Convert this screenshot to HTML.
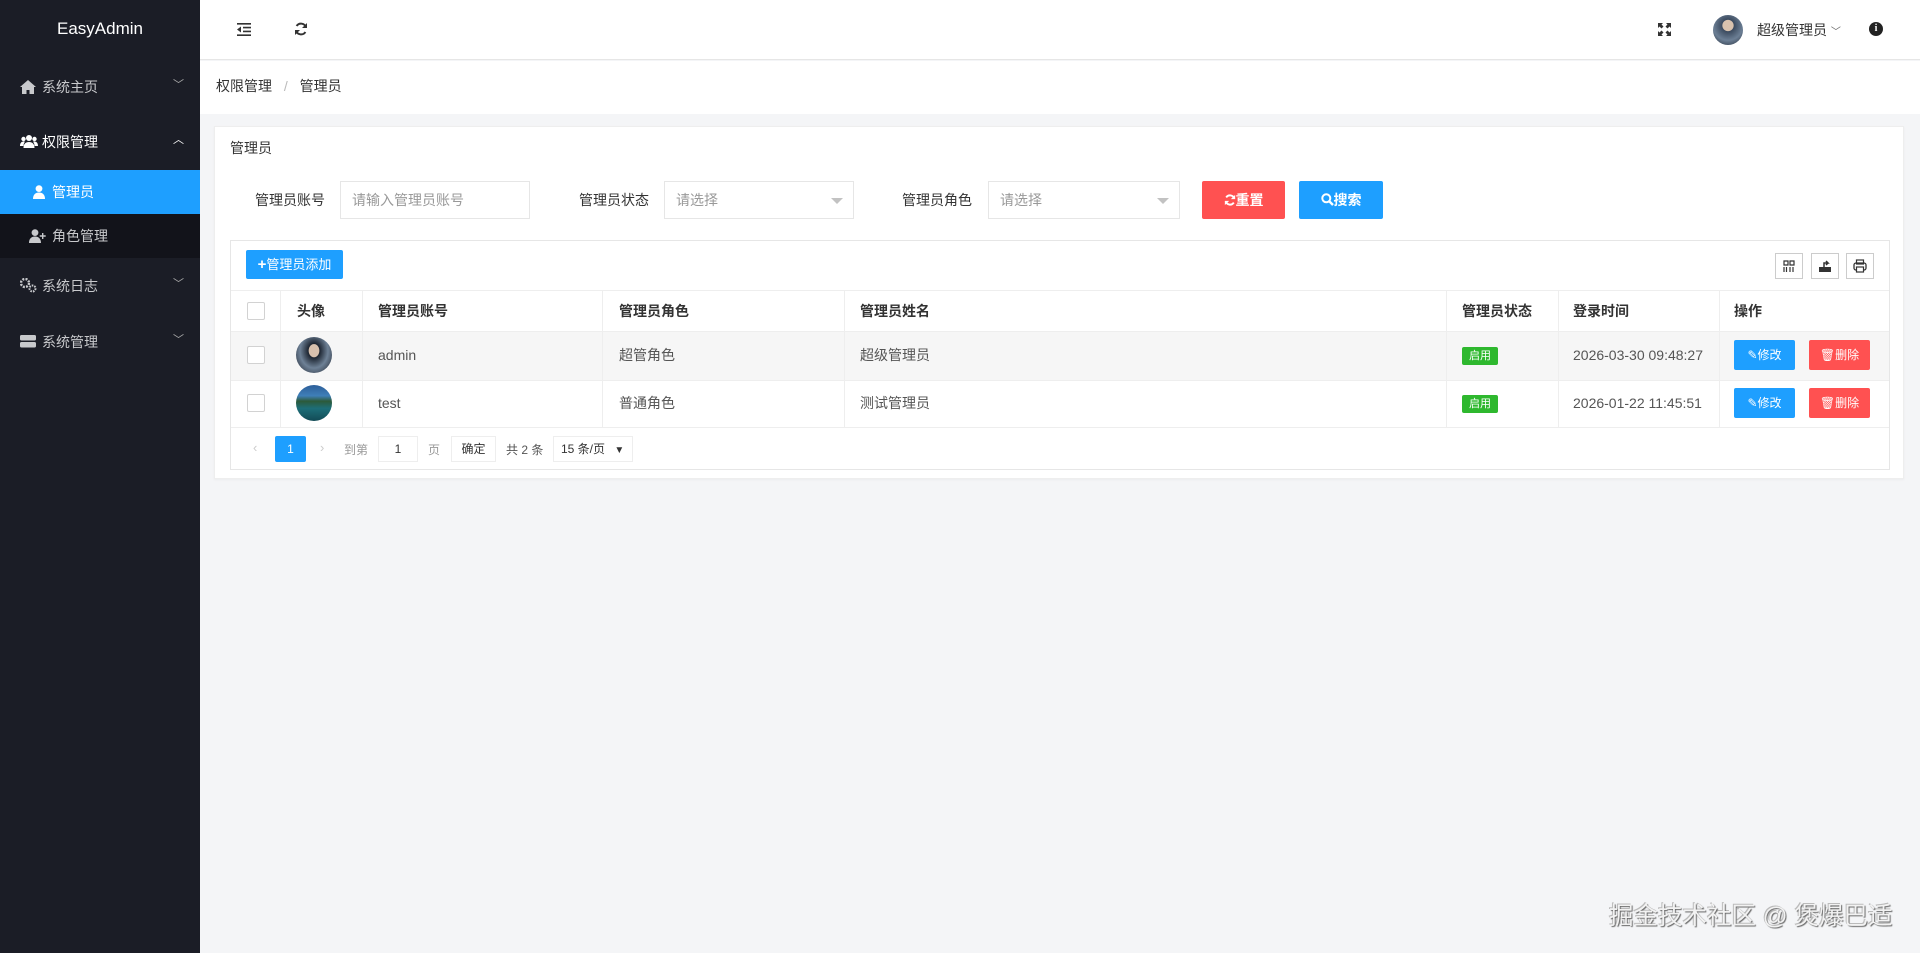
<!DOCTYPE html>
<html><head><meta charset="utf-8"><style>
*{box-sizing:border-box;margin:0;padding:0}
body{width:1920px;height:953px;overflow:hidden;background:#f4f5f7;font-family:"Liberation Sans","Noto Sans CJK SC",sans-serif;font-size:14px;color:#333;position:relative}
.abs{position:absolute}
.side{left:0;top:0;width:200px;height:953px;background:#1b1d26}
.logo{left:0;top:0;width:200px;height:60px;line-height:58px;text-align:center;color:#fff;font-size:17px}
.mi{left:0;width:200px;height:44px;line-height:44px;color:#c8c9cc;font-size:14px;padding-left:42px}
.mi .ar{position:absolute;right:16px;top:-2px;font-size:11px;color:#aaa}
.ic{position:absolute;left:20px;top:14px}
.hdr{left:200px;top:0;width:1720px;height:60px;background:#fff;border-bottom:1px solid #e6e6e6}
.bc{left:200px;top:61px;width:1720px;height:53px;background:#fff;font-size:14px;line-height:50px;padding-left:16px;color:#333}
.card{left:214px;top:126px;width:1690px;height:353px;background:#fff;border:1px solid #eee;box-shadow:0 1px 2px rgba(0,0,0,.04)}
.lbl{font-size:14px;color:#333;top:190px}
.inp{top:181px;height:38px;border:1px solid #e6e6e6;background:#fff;padding-left:11px;line-height:36px;color:#999;font-size:14px}
.tri{position:absolute;right:10px;top:16px;width:0;height:0;border:6px solid transparent;border-top-color:#c2c2c2}
.btn{color:#fff;font-size:14px;text-align:center;border-radius:2px}
.tb{left:230px;top:240px;width:1660px;height:230px;border:1px solid #e6e6e6;background:#fff}
.th{top:291px;height:40px;line-height:40px;font-weight:bold;font-size:14px}
.vl{width:1px;background:#eee;top:291px;height:136px}
.hl{left:231px;width:1658px;height:1px;background:#eee}
.cb{width:18px;height:18px;border:1px solid #d2d2d2;background:#fff;border-radius:2px}
.td{line-height:20px;font-size:14px;color:#555}
.av{width:36px;height:36px;border-radius:50%}
.tag{width:36px;height:18px;line-height:18px;background:#2eb82e;color:#fff;font-size:11px;text-align:center;border-radius:2px}
.sb{height:30px;line-height:30px;font-size:12px;color:#fff;text-align:center;border-radius:2px}
.tico{width:28px;height:26px;border:1px solid #ccc;top:253px}
</style></head><body>
<div class="abs side"></div>
<div class="abs logo">EasyAdmin</div>
<div class="abs mi" style="top:65px"><svg class="ic" width="16" height="15" viewBox="0 0 16 15"><path d="M8 1L0 8h2v7h4.5v-4h3v4H14V8h2z" fill="#c8c9cc"/></svg>系统主页<span class="ar">﹀</span></div>
<div class="abs mi" style="top:120px;color:#fff"><svg class="ic" width="18" height="15" viewBox="0 0 18 15"><circle cx="9" cy="4" r="3" fill="#fff"/><circle cx="3.5" cy="5" r="2.2" fill="#fff"/><circle cx="14.5" cy="5" r="2.2" fill="#fff"/><path d="M3.5 14c0-4 2-6 5.5-6s5.5 2 5.5 6z M0 12c0-3 1.5-4.5 3.5-4.5 1 0 1.5.3 1.5.3-1 1.2-1.5 2.5-1.5 4.2z M18 12c0-3-1.5-4.5-3.5-4.5-1 0-1.5.3-1.5.3 1 1.2 1.5 2.5 1.5 4.2z" fill="#fff"/></svg>权限管理<span class="ar" style="color:#fff">︿</span></div>
<div class="abs" style="left:0;top:170px;width:200px;height:44px;background:#1e9fff"></div>
<div class="abs mi" style="top:170px;color:#fff;padding-left:52px"><svg style="position:absolute;left:33px;top:15px" width="12" height="14" viewBox="0 0 12 14"><circle cx="6" cy="3.6" r="3.4" fill="#fff"/><path d="M0 14c0-4.5 2.5-6.5 6-6.5s6 2 6 6.5z" fill="#fff"/></svg>管理员</div>
<div class="abs" style="left:0;top:214px;width:200px;height:44px;background:#12131a"></div>
<div class="abs mi" style="top:214px;padding-left:52px"><svg style="position:absolute;left:29px;top:15px" width="18" height="14" viewBox="0 0 18 14"><circle cx="6" cy="3.6" r="3.4" fill="#c8c9cc"/><path d="M0 14c0-4.5 2.5-6.5 6-6.5s6 2 6 6.5z M13 4h1.4v2.3h2.3v1.4h-2.3V10H13V7.7h-2.3V6.3H13z" fill="#c8c9cc"/></svg>角色管理</div>
<div class="abs mi" style="top:264px"><svg class="ic" width="17" height="15" viewBox="0 0 17 15"><circle cx="5" cy="5" r="4" fill="none" stroke="#c8c9cc" stroke-width="2.4" stroke-dasharray="2 1.2"/><circle cx="12.5" cy="10.5" r="3" fill="none" stroke="#c8c9cc" stroke-width="2" stroke-dasharray="1.6 1"/></svg>系统日志<span class="ar">﹀</span></div>
<div class="abs mi" style="top:320px"><svg class="ic" width="16" height="14" viewBox="0 0 16 14"><rect x="0" y="1" width="16" height="5.5" rx="1.5" fill="#c8c9cc"/><rect x="0" y="8" width="16" height="5.5" rx="1.5" fill="#c8c9cc"/></svg>系统管理<span class="ar">﹀</span></div>

<div class="abs hdr"></div>
<svg class="abs" style="left:237px;top:23px" width="14" height="13" viewBox="0 0 14 13"><path d="M0 0h14v1.6H0zM6 3.8h8v1.6H6zM6 7.6h8v1.6H6zM0 11.4h14V13H0zM4 3.5v6L0 6.5z" fill="#333"/></svg>
<svg class="abs" style="left:294px;top:22px" width="14" height="14" viewBox="0 0 14 14"><path d="M12 5.5A5.2 5.2 0 0 0 2.6 4 M2 8.5a5.2 5.2 0 0 0 9.4 1.5" fill="none" stroke="#333" stroke-width="2"/><path d="M13 1v5H8zM1 13V8h5z" fill="#333"/></svg>
<svg class="abs" style="left:1658px;top:23px" width="13" height="13" viewBox="0 0 13 13"><path d="M0 0h5L3.5 1.5 5.5 3.5 3.5 5.5 1.5 3.5 0 5zM13 0v5L11.5 3.5 9.5 5.5 7.5 3.5 9.5 1.5 8 0zM0 13V8l1.5 1.5 2-2 2 2-2 2L5 13zM13 13H8l1.5-1.5-2-2 2-2 2 2L13 8z" fill="#333"/></svg>
<div class="abs" style="left:1713px;top:15px;width:30px;height:30px;border-radius:50%;background:radial-gradient(circle at 50% 35%,#d9c2ae 0 22%,#3b4a5e 24%,#6c7f95 60%,#222b38 100%)"></div>
<div class="abs" style="left:1757px;top:20px;font-size:14px;color:#333">超级管理员 <span style="font-size:10px;color:#666">﹀</span></div>
<div class="abs" style="left:1869px;top:22px;width:14px;height:14px;border-radius:50%;background:#222;color:#fff;font-size:10px;font-weight:bold;text-align:center;line-height:14px;font-family:'Liberation Serif',serif">i</div>

<div class="abs bc">权限管理 <span style="color:#bbb;margin:0 8px">/</span> 管理员</div>

<div class="abs card"></div>
<div class="abs" style="left:230px;top:138px;font-size:14px">管理员</div>
<div class="abs lbl" style="left:255px">管理员账号</div>
<div class="abs inp" style="left:340px;width:190px">请输入管理员账号</div>
<div class="abs lbl" style="left:579px">管理员状态</div>
<div class="abs inp" style="left:664px;width:190px">请选择<span class="tri"></span></div>
<div class="abs lbl" style="left:902px">管理员角色</div>
<div class="abs inp" style="left:988px;width:192px">请选择<span class="tri"></span></div>
<div class="abs btn" style="left:1202px;top:181px;width:83px;height:38px;line-height:38px;background:#ff5151;font-weight:bold"><svg width="12" height="12" viewBox="0 0 14 14" style="vertical-align:-1px"><path d="M12 5.5A5.2 5.2 0 0 0 2.6 4 M2 8.5a5.2 5.2 0 0 0 9.4 1.5" fill="none" stroke="#fff" stroke-width="2.2"/><path d="M13 1v5H8zM1 13V8h5z" fill="#fff"/></svg>重置</div>
<div class="abs btn" style="left:1299px;top:181px;width:84px;height:38px;line-height:38px;background:#1e9fff;font-weight:bold"><svg width="13" height="13" viewBox="0 0 13 13" style="vertical-align:-1px"><circle cx="5.3" cy="5.3" r="4" fill="none" stroke="#fff" stroke-width="2"/><path d="M8 8l4 4" stroke="#fff" stroke-width="2.4"/></svg>搜索</div>

<div class="abs tb"></div>
<div class="abs btn" style="left:246px;top:250px;width:97px;height:29px;line-height:29px;font-size:13px;background:#1e9fff"><b style="font-size:15px">+</b>管理员添加</div>
<div class="abs tico" style="left:1775px"><svg width="26" height="24" viewBox="0 0 26 24"><path d="M8 7h4v4H8zM14 7h4v4h-4zM8 13v5M10.5 13v5M14 13v5M17 13v5" fill="none" stroke="#333" stroke-width="1.2"/></svg></div>
<div class="abs tico" style="left:1811px"><svg width="26" height="24" viewBox="0 0 26 24"><path d="M7 13h12v5H7z" fill="#333"/><path d="M12 13V9h4l-2-2M16 9l-2 2" fill="none" stroke="#333" stroke-width="1.5"/></svg></div>
<div class="abs tico" style="left:1846px"><svg width="26" height="24" viewBox="0 0 26 24"><rect x="7" y="9" width="12" height="7" rx="2" fill="none" stroke="#333" stroke-width="1.3"/><rect x="9.5" y="6" width="7" height="4" fill="none" stroke="#333" stroke-width="1.2"/><rect x="9.5" y="13" width="7" height="5" fill="#fff" stroke="#333" stroke-width="1.2"/></svg></div>

<div class="abs hl" style="top:290px"></div>
<div class="abs" style="left:231px;top:331px;width:1658px;height:49px;background:#f6f6f6"></div>
<div class="abs hl" style="top:331px"></div>
<div class="abs hl" style="top:380px"></div>
<div class="abs hl" style="top:427px"></div>
<div class="abs vl" style="left:280px"></div><div class="abs vl" style="left:362px"></div><div class="abs vl" style="left:602px"></div><div class="abs vl" style="left:844px"></div><div class="abs vl" style="left:1446px"></div><div class="abs vl" style="left:1558px"></div><div class="abs vl" style="left:1719px"></div>

<div class="abs cb" style="left:247px;top:302px"></div>
<div class="abs th" style="left:297px">头像</div>
<div class="abs th" style="left:378px">管理员账号</div>
<div class="abs th" style="left:619px">管理员角色</div>
<div class="abs th" style="left:860px">管理员姓名</div>
<div class="abs th" style="left:1462px">管理员状态</div>
<div class="abs th" style="left:1573px">登录时间</div>
<div class="abs th" style="left:1734px">操作</div>

<div class="abs cb" style="left:247px;top:346px"></div>
<div class="abs av" style="left:296px;top:337px;background:radial-gradient(ellipse at 50% 38%,#d7c0ad 0 20%,#1c2430 22%,#6e8196 55%,#1a1f29 100%)"></div>
<div class="abs td" style="left:378px;top:345px">admin</div>
<div class="abs td" style="left:619px;top:345px">超管角色</div>
<div class="abs td" style="left:860px;top:345px">超级管理员</div>
<div class="abs tag" style="left:1462px;top:347px">启用</div>
<div class="abs td" style="left:1573px;top:345px">2026-03-30 09:48:27</div>
<div class="abs sb" style="left:1734px;top:340px;width:61px;background:#1e9fff">✎修改</div>
<div class="abs sb" style="left:1809px;top:340px;width:61px;background:#ff5151">🗑删除</div>

<div class="abs cb" style="left:247px;top:394px"></div>
<div class="abs av" style="left:296px;top:385px;background:linear-gradient(#2d5f9a 0,#3f7fb8 30%,#2c5a3a 45%,#1d6e78 65%,#124a55 100%)"></div>
<div class="abs td" style="left:378px;top:393px">test</div>
<div class="abs td" style="left:619px;top:393px">普通角色</div>
<div class="abs td" style="left:860px;top:393px">测试管理员</div>
<div class="abs tag" style="left:1462px;top:395px">启用</div>
<div class="abs td" style="left:1573px;top:393px">2026-01-22 11:45:51</div>
<div class="abs sb" style="left:1734px;top:388px;width:61px;background:#1e9fff">✎修改</div>
<div class="abs sb" style="left:1809px;top:388px;width:61px;background:#ff5151">🗑删除</div>

<div class="abs" style="left:253px;top:440px;color:#ccc;font-size:13px">‹</div>
<div class="abs" style="left:275px;top:436px;width:31px;height:26px;background:#1e9fff;color:#fff;font-size:12px;text-align:center;line-height:26px;border-radius:2px">1</div>
<div class="abs" style="left:320px;top:440px;color:#ccc;font-size:13px">›</div>
<div class="abs" style="left:344px;top:441px;color:#999;font-size:12px">到第</div>
<div class="abs" style="left:378px;top:436px;width:40px;height:26px;border:1px solid #eee;text-align:center;line-height:24px;font-size:12px">1</div>
<div class="abs" style="left:428px;top:441px;color:#999;font-size:12px">页</div>
<div class="abs" style="left:451px;top:436px;width:45px;height:26px;border:1px solid #eee;text-align:center;line-height:24px;font-size:12px">确定</div>
<div class="abs" style="left:506px;top:441px;color:#555;font-size:12px">共 2 条</div>
<div class="abs" style="left:553px;top:436px;width:80px;height:26px;border:1px solid #eee;line-height:24px;font-size:12px;padding-left:7px">15 条/页 <span style="margin-left:6px;font-size:10px">▼</span></div>

<div class="abs" style="left:1609px;top:897px;font-size:24.5px;color:#f2f2f2;text-shadow:1px 1px 1px #666,-1px -1px 0 #bbb">掘金技术社区 @ 煲爆巴适</div>
</body></html>
